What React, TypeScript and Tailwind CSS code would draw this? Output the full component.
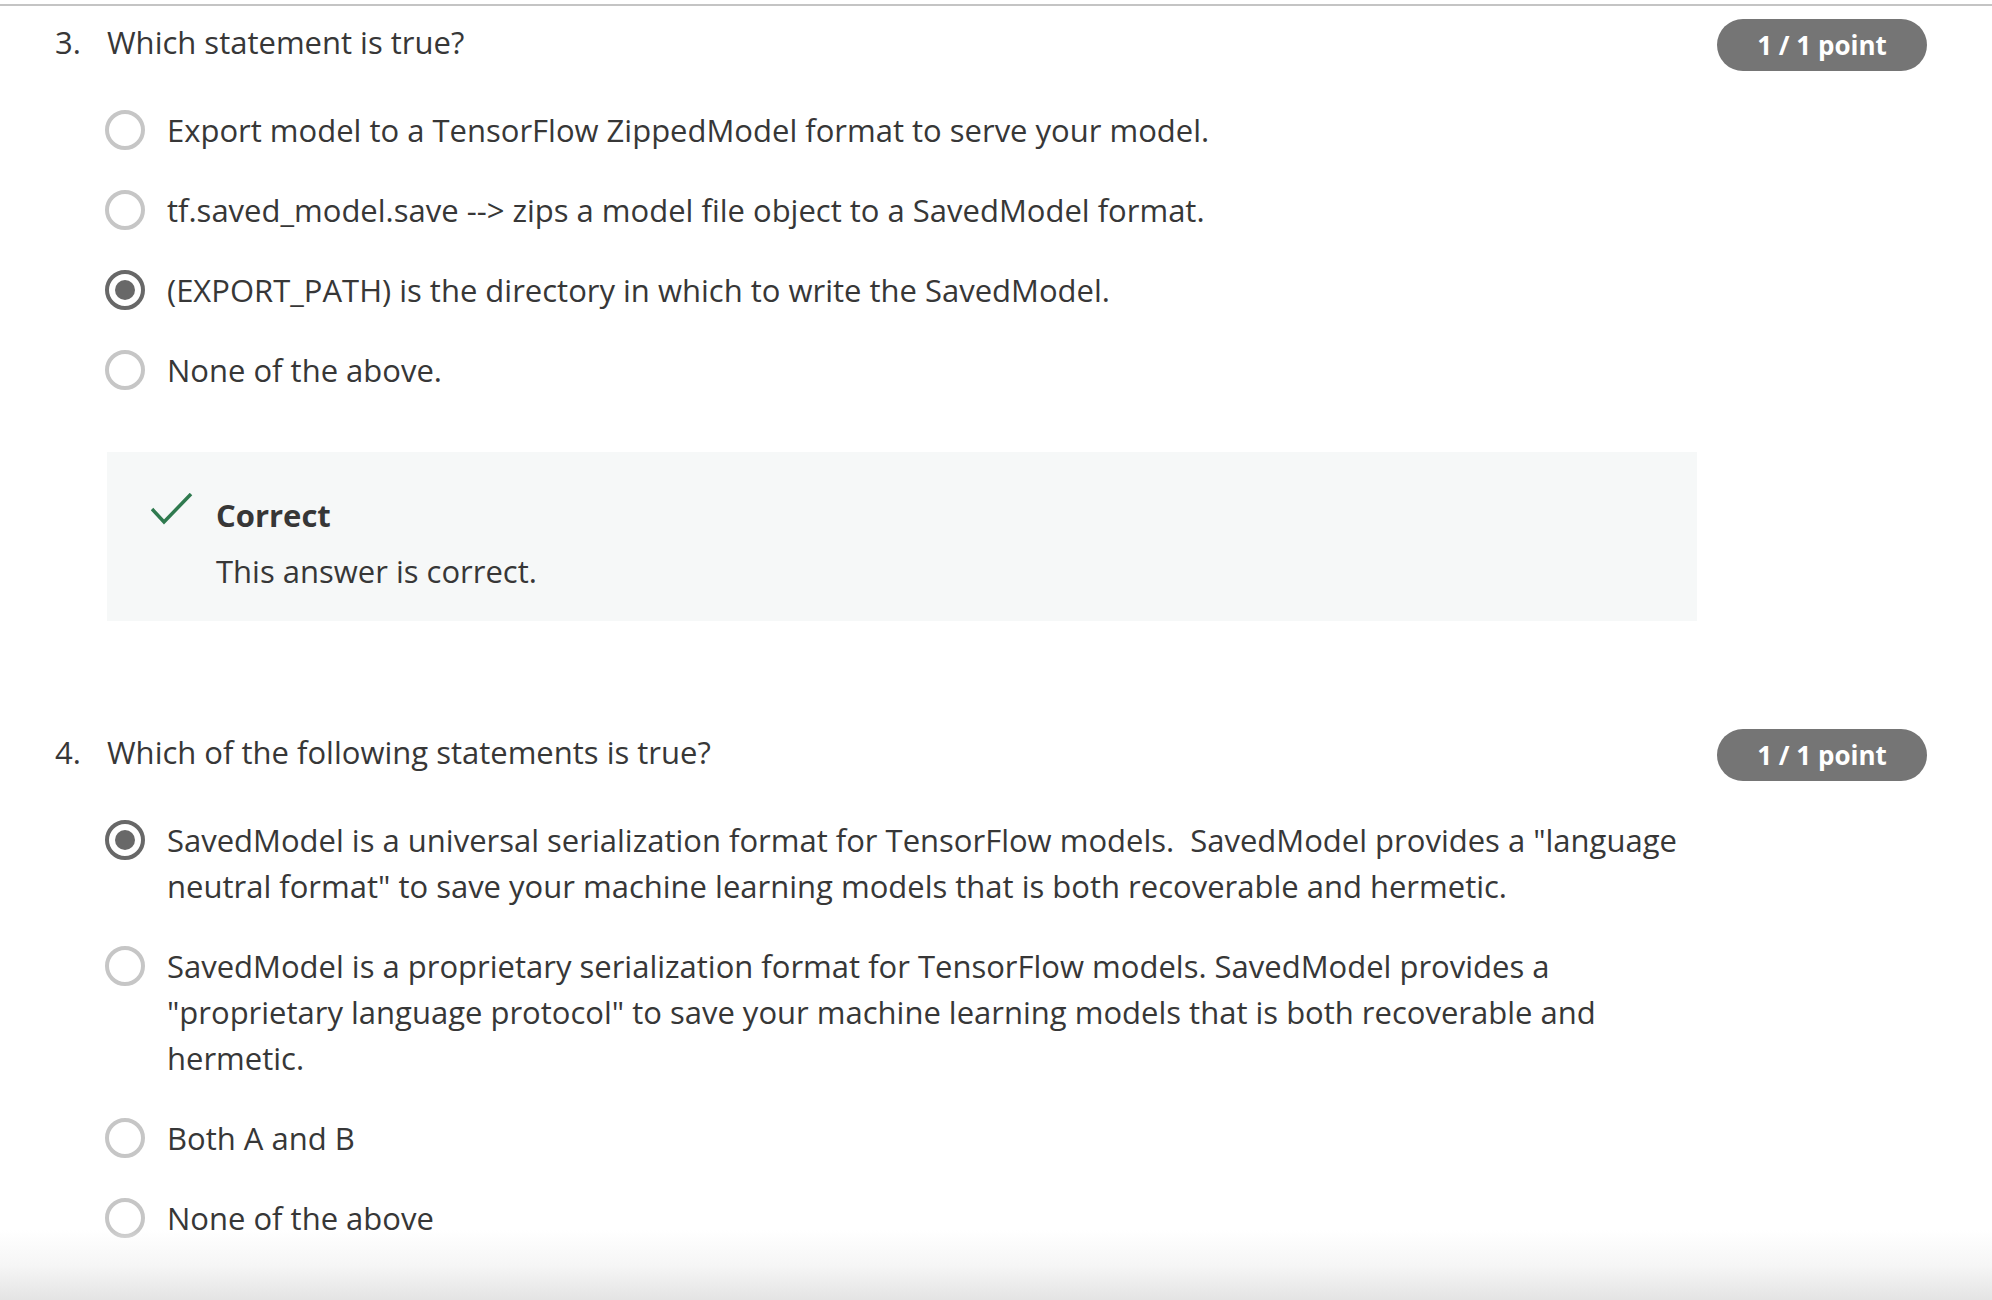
import React from 'react';

interface Option {
  text: string;
  checked?: boolean;
}

interface Question {
  num: number;
  title: string;
  options: Option[];
  feedback?: boolean;
}

const questions: Question[] = [
  {
    num: 3,
    title: 'Which statement is true?',
    options: [
      { text: 'Export model to a TensorFlow ZippedModel format to serve your model.' },
      { text: 'tf.saved_model.save --> zips a model file object to a SavedModel format.' },
      { text: '(EXPORT_PATH) is the directory in which to write the SavedModel.', checked: true },
      { text: 'None of the above.' },
    ],
    feedback: true,
  },
  {
    num: 4,
    title: 'Which of the following statements is true?',
    options: [
      {
        text: 'SavedModel is a universal serialization format for TensorFlow models.\u00a0 SavedModel provides a "language neutral format" to save your machine learning models that is both recoverable and hermetic.',
        checked: true,
      },
      {
        text: 'SavedModel is a proprietary serialization format for TensorFlow models. SavedModel provides a "proprietary language protocol" to save your machine learning models that is both recoverable and hermetic.',
      },
      { text: 'Both A and B' },
      { text: 'None of the above' },
    ],
  },
];

const Radio = ({ checked }: { checked?: boolean }) =>
  checked ? (
    <div className="mt-[3px] flex h-[40px] w-[40px] shrink-0 items-center justify-center rounded-full border-[4px] border-[#686868] bg-white">
      <div className="h-[20px] w-[20px] rounded-full bg-[#686868]" />
    </div>
  ) : (
    <div className="mt-[3px] h-[40px] w-[40px] shrink-0 rounded-full border-[4px] border-[#c6c6c6] bg-white" />
  );

const QuestionBlock = ({ q }: { q: Question }) => (
  <section className="pl-[55px] pr-[65px]">
    {/* Header */}
    <div className="flex items-start justify-between">
      <div className="flex text-[31px] leading-[46px]">
        <span className="w-[52px]">{q.num}.</span>
        <span>{q.title}</span>
      </div>
      <div className="flex h-[52px] w-[210px] items-center justify-center rounded-full bg-[#757575] text-[26px] font-bold text-white">
        1 / 1 point
      </div>
    </div>

    {/* Options */}
    <div className="mt-[36px] flex w-[1642px] flex-col gap-[34px] pl-[50px]">
      {q.options.map((o) => (
        <div key={o.text} className="flex items-start gap-[22px]">
          <Radio checked={o.checked} />
          <p className="text-[31px] leading-[46px]">{o.text}</p>
        </div>
      ))}
    </div>

    {/* Feedback */}
    {q.feedback && (
      <div className="ml-[52px] mt-[59px] flex h-[169px] w-[1590px] bg-[#f6f8f8] pl-[44px] pt-[40px]">
        <svg width="42" height="32" viewBox="0 0 42 32" className="mt-[1px] shrink-0">
          <polyline points="1,16 13,29 40,1" fill="none" stroke="#2f7a4f" strokeWidth="3.5" />
        </svg>
        <div className="ml-[23px] text-[31px]">
          <div className="font-bold leading-[46px]">Correct</div>
          <div className="mt-[10px] leading-[46px]">This answer is correct.</div>
        </div>
      </div>
    )}
  </section>
);

export default function App() {
  return (
    <div
      className="relative h-[1300px] w-[1992px] overflow-hidden bg-white text-[#373737]"
      style={{ fontFamily: '"Open Sans", "Noto Sans", sans-serif' }}
    >
      <div className="mt-[4px] h-[2px] bg-[#c4c4c4]" />
      <div className="mt-[13px]">
        <QuestionBlock q={questions[0]} />
      </div>
      <div className="mt-[108px]">
        <QuestionBlock q={questions[1]} />
      </div>

      {/* bottom fade */}
      <div className="pointer-events-none absolute inset-x-0 bottom-0 h-[70px] bg-gradient-to-b from-white/0 via-[#f6f6f6] to-[#e4e4e4]" />
    </div>
  );
}
